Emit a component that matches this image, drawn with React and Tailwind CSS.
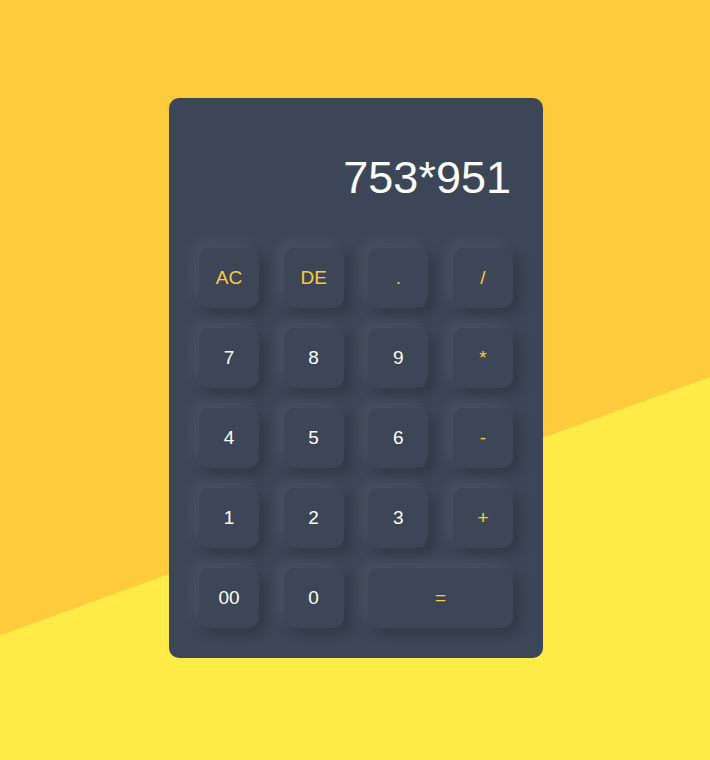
import React, { useState } from 'react';

// Keys of the pad, top to bottom. "op" keys get the yellow label.
const keys = [
  { label: 'AC', op: true },
  { label: 'DE', op: true },
  { label: '.', op: true },
  { label: '/', op: true },
  { label: '7' },
  { label: '8' },
  { label: '9' },
  { label: '*', op: true },
  { label: '4' },
  { label: '5' },
  { label: '6' },
  { label: '-', op: true },
  { label: '1' },
  { label: '2' },
  { label: '3' },
  { label: '+', op: true },
  { label: '00' },
  { label: '0' },
  { label: '=', op: true, wide: true },
];

const Key = ({ label, op, wide, onPress }) => (
  <button
    onClick={() => onPress(label)}
    className={`h-[60px] rounded-[10px] bg-[#3c4656] text-[19px] shadow-[-6px_-6px_14px_rgba(255,255,255,0.07),6px_6px_14px_rgba(0,0,0,0.2)] ${
      wide ? 'col-span-2' : 'w-[60px]'
    } ${op ? 'text-[#fdcb3b]' : 'text-white'}`}
  >
    {label}
  </button>
);

const App = () => {
  const [expr, setExpr] = useState('753*951');

  const handlePress = (label) => {
    if (label === 'AC') return setExpr('');
    if (label === 'DE') return setExpr((e) => e.slice(0, -1));
    if (label === '=') {
      try {
        // eslint-disable-next-line no-new-func
        setExpr(String(Function(`return (${expr})`)()));
      } catch {
        setExpr('Error');
      }
      return;
    }
    setExpr((e) => e + label);
  };

  return (
    <div
      className="h-[760px] flex justify-center pt-[98px] pl-[2px] bg-[linear-gradient(160deg,#fdcb3b_62.4%,#ffeb48_62.4%)]"
      style={{ fontFamily: '"Liberation Sans", Arial, sans-serif' }}
    >
      <div className="w-[374px] h-[560px] rounded-[10px] bg-[#3c4656] p-[30px]">
        <div className="h-[120px] pt-[27px] pr-[2px] text-right text-[45px] leading-none text-white">
          {expr}
        </div>
        <div className="grid grid-cols-[60px_60px_60px_60px] justify-between gap-y-[20px]">
          {keys.map((k) => (
            <Key key={k.label} {...k} onPress={handlePress} />
          ))}
        </div>
      </div>
    </div>
  );
};

export default App;
